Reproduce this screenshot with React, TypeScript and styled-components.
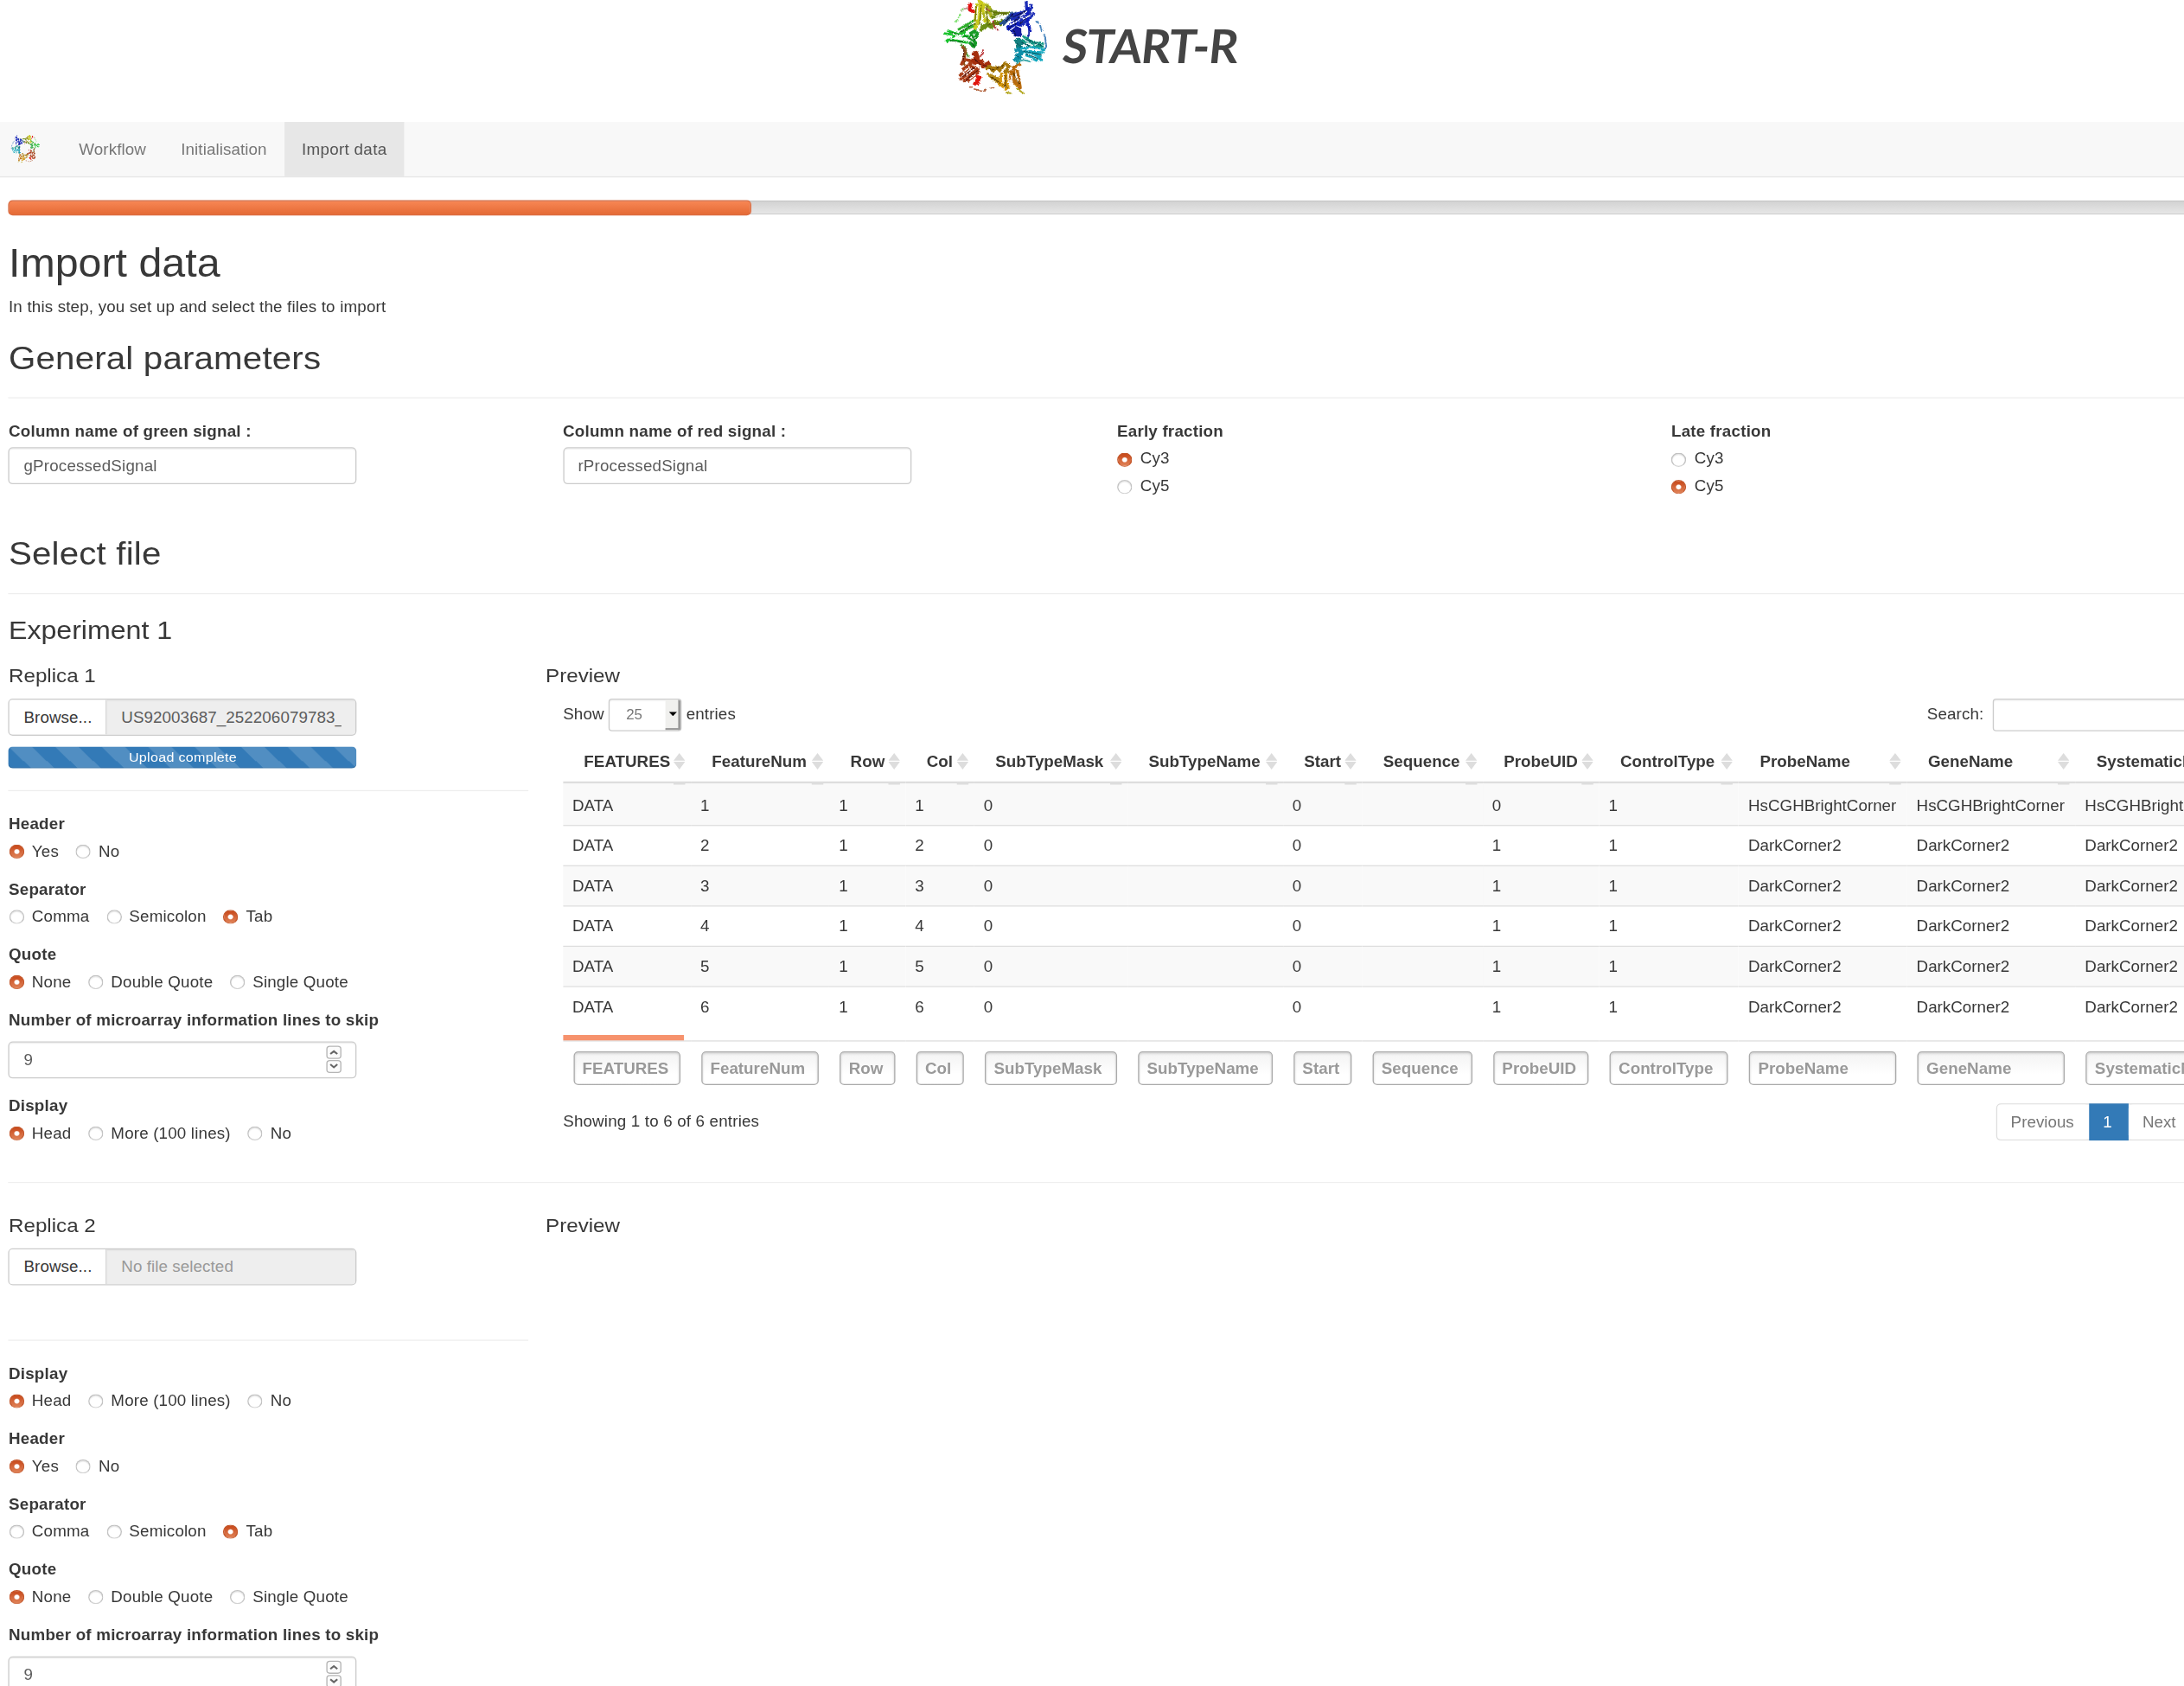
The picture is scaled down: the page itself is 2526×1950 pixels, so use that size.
import React from "react";
import styled, { createGlobalStyle, css } from "styled-components";

const GlobalStyle = createGlobalStyle`
  *, *::before, *::after { box-sizing: border-box; }
  html, body { margin: 0; padding: 0; background: #fff; }
`;

/* The interface is laid out in 14px Bootstrap units and enlarged as a whole. */
const Viewport = styled.div`
  width: 2526px;
  height: 1950px;
  overflow: hidden;
  background: #fff;
`;

const Page = styled.div`
  width: 1881px;
  height: 1550px;
  overflow: hidden;
  transform: scale(1.3431, 1.2587);
  transform-origin: 0 0;
  font-family: "Liberation Sans", Arial, sans-serif;
  font-size: 14px;
  line-height: 20px;
  letter-spacing: 0.12px;
  color: #383838;
`;

const Banner = styled.header`
  display: flex;
  height: 111.8px;
  padding-left: 807.9px;
`;

const BannerLogo = styled.div`
  width: 100.5px;
  height: 91.4px;
  svg { display: block; width: 100%; height: 100%; }
`;

const BannerTitle = styled.div`
  margin-left: 5.8px;
  padding-top: 10.6px;
  font-family: Lato, "Open Sans", sans-serif;
  font-weight: 700;
  font-size: 43px;
  line-height: 62px;
  letter-spacing: -0.9px;
  color: #444;
  transform: scaleX(0.92) skewX(-6deg);
  transform-origin: 0 50%;
`;

const Navbar = styled.nav`
  display: flex;
  height: 51px;
  margin-bottom: 21.6px;
  background: #f8f8f8;
  border-bottom: 1px solid #e7e7e7;
`;

const NavLogo = styled.div`
  width: 53px;
  padding: 12.5px 0 0 8.6px;
  svg { display: block; width: 26px; height: 26px; transform: scaleX(-1); }
`;

const NavItem = styled.a<{ $active?: boolean }>`
  height: 50px;
  padding: 15px;
  letter-spacing: ${(p) => (p.$active ? 0.23 : 0.06)}px;
  color: ${(p) => (p.$active ? "#555" : "#777")};
  background: ${(p) => (p.$active ? "#e7e7e7" : "transparent")};
`;

const Content = styled.main`
  width: 1879px;
  margin-left: 7.45px;
`;

const Track = styled.div`
  height: 13px;
  border: 1px solid #ccc;
  border-top-color: #b4b4b4;
  border-radius: 4px;
  background: linear-gradient(#d2d2d2, #e6e6e6);
`;

const TrackFill = styled.div`
  width: 639.6px;
  height: 14px;
  margin: -1.6px 0 0 -1px;
  border: 1px solid #dc6a3e;
  border-radius: 4px;
  background: linear-gradient(#f78654, #e56a35);
`;

const H1 = styled.h1`
  margin: 25px 0 10px;
  font-size: 36px;
  line-height: 40px;
  letter-spacing: 0;
  font-weight: 400;
`;

const Paragraph = styled.p`
  margin: 0 0 10px;
`;

const H2 = styled.h2`
  margin: 19.8px 0 0;
  font-size: 30px;
  line-height: 33px;
  font-weight: 400;
`;

const H3 = styled.h3`
  margin: 0 0 20px;
  font-size: 24px;
  line-height: 26.4px;
  letter-spacing: -0.05px;
  font-weight: 400;
`;

const H4 = styled.h4`
  margin: 0 0 10px;
  font-size: 18px;
  line-height: 19.8px;
  letter-spacing: 0;
  font-weight: 400;
`;

const Rule = styled.hr<{ $top?: number; $bottom?: number }>`
  height: 1px;
  margin: ${(p) => p.$top ?? 20}px 0 ${(p) => p.$bottom ?? 20}px;
  border: 0;
  background: #eee;
`;

const ParamRow = styled.section`
  display: grid;
  grid-template-columns: repeat(4, 477.25px);
  width: 1909px;
  height: 85.6px;
`;

const Label = styled.label`
  display: block;
  margin-bottom: 5px;
  font-weight: 700;
  letter-spacing: 0.15px;
`;

const inputBox = css`
  border: 1px solid #ccc;
  border-radius: 4px;
  box-shadow: inset 0 1px 1px rgba(0, 0, 0, 0.075);
  color: #5c5c5c;
`;

const TextBox = styled.div`
  ${inputBox}
  width: 300px;
  height: 34px;
  padding: 6px 12px;
`;

const Options = styled.div<{ $stacked?: boolean }>`
  display: flex;
  flex-direction: ${(p) => (p.$stacked ? "column" : "row")};
  gap: ${(p) => (p.$stacked ? 5 : 14.2)}px;
`;

const Option = styled.span`
  display: flex;
  white-space: nowrap;
`;

const Dot = styled.i<{ $on: boolean }>`
  flex: none;
  width: 13px;
  height: 13px;
  margin: 4.5px 6.7px 0 0.3px;
  border-radius: 50%;
  border: 1px solid ${(p) => (p.$on ? "#c4572b" : "#c2c2c2")};
  border-bottom-color: ${(p) => (p.$on ? "#d3764f" : "#d2d2d2")};
  background: ${(p) =>
    p.$on
      ? "radial-gradient(circle, #fff 0 1.7px, rgba(255,255,255,0) 2.7px), linear-gradient(#c8481a, #e08358)"
      : "#fff"};
  box-shadow: ${(p) => (p.$on ? "none" : "inset 0 1px 1px #e4e4e4")};
`;

const FormGroup = styled.div`
  margin-bottom: 15px;
`;

const Columns = styled.section<{ $top?: number }>`
  display: flex;
  gap: 15px;
  padding-top: ${(p) => p.$top ?? 0}px;
`;

const Sidebar = styled.div`
  width: 447.4px;
  flex: none;
`;

const FilePicker = styled.div`
  ${inputBox}
  display: flex;
  width: 300px;
  height: 34px;
  overflow: hidden;
  letter-spacing: 0.05px;
`;

const BrowseButton = styled.div`
  width: 84px;
  padding: 6px 0 0 12px;
  background: #fff;
  border-right: 1px solid #ccc;
  color: #383838;
`;

const FileName = styled.div<{ $empty: boolean }>`
  flex: 1;
  margin-right: 12px;
  padding: 6px 0 0 12px;
  overflow: hidden;
  white-space: nowrap;
  color: ${(p) => (p.$empty ? "#999" : "#5c5c5c")};
`;

const FileField = styled.div`
  flex: 1;
  display: flex;
  min-width: 0;
  background: #eee;
  box-shadow: inset 0 1px 1px rgba(0, 0, 0, 0.075);
`;

const UploadBar = styled.div`
  width: 300px;
  height: 20px;
  margin-top: 10px;
  border-radius: 4px;
  background-color: #337ab7;
  background-image: linear-gradient(
    45deg,
    rgba(255, 255, 255, 0.15) 25%,
    transparent 25%,
    transparent 50%,
    rgba(255, 255, 255, 0.15) 50%,
    rgba(255, 255, 255, 0.15) 75%,
    transparent 75%,
    transparent
  );
  background-size: 40px 40px;
  box-shadow: inset 0 -1px 0 rgba(0, 0, 0, 0.12);
  color: #fff;
  font-size: 12px;
  letter-spacing: 0.2px;
  text-align: center;
`;

const NumberBox = styled(TextBox)`
  display: flex;
  justify-content: space-between;
  margin-top: 10px;
  padding-top: 3px;
  padding-right: 12.6px;
  padding-bottom: 0;
  line-height: 26px;
`;

const Spinner = styled.div`
  display: flex;
  flex-direction: column;
  gap: 1px;
  svg {
    width: 13px;
    height: 12px;
    border: 1px solid #b5b5b5;
    border-radius: 3px;
    background: #fbfbfb;
  }
`;

const Preview = styled.div`
  width: 1424px;
  flex: none;
`;

const TableArea = styled.div`
  width: 1402px;
  margin-left: 15px;
  letter-spacing: 0;
`;

const Controls = styled.div`
  display: flex;
  height: 30px;
  margin-bottom: 10.6px;
`;

const ControlText = styled.span<{ $pushed?: boolean }>`
  margin-left: ${(p) => (p.$pushed ? "auto" : 0)};
  padding-top: 4px;
  letter-spacing: 0.08px;
`;

const SelectBox = styled.div`
  ${inputBox}
  display: flex;
  justify-content: space-between;
  width: 62.8px;
  height: 30px;
  margin: 0 4px;
  padding-left: 14px;
  border-radius: 3px;
  font-size: 12.6px;
  line-height: 29px;
  color: #777;
  overflow: hidden;
`;

const SelectArrow = styled.div`
  display: flex;
  align-items: center;
  justify-content: center;
  width: 13px;
  padding-left: 3px;
  border-right: 2px solid #999;
  border-bottom: 2px solid #999;
  background: #f0f0ee;
  svg { flex: none; width: 7px; height: 4px; }
`;

const SearchBox = styled.div`
  ${inputBox}
  width: 171.2px;
  height: 30px;
  margin-left: 7.4px;
  border-radius: 3px;
`;

const DataTable = styled.table`
  width: 1455px;
  table-layout: fixed;
  border-collapse: separate;
  border-spacing: 0;
`;

const HeadCell = styled.th`
  height: 38px;
  padding: 8px 0 8px 18px;
  border-bottom: 2px solid #ddd;
  text-align: left;
  font-weight: 700;
`;

const HeadInner = styled.div`
  position: relative;
  display: flex;
  justify-content: space-between;
  align-items: flex-start;
  height: 20px;
  padding-right: 5px;
  svg { width: 10px; height: 15px; margin-top: 2px; }
  &::after {
    content: "";
    position: absolute;
    right: 5px;
    top: 29px;
    width: 10px;
    height: 2px;
    background: #ddd;
  }
`;

const Cell = styled.td<{ $first: boolean; $odd: boolean }>`
  height: ${(p) => (p.$first ? 38 : 37)}px;
  padding: ${(p) => (p.$first ? 9 : 8)}px 8px 8px;
  border-top: ${(p) => (p.$first ? 0 : 1)}px solid #ddd;
  background: ${(p) => (p.$odd ? "#f9f9f9" : "#fff")};
  white-space: nowrap;
`;

const MarkerCell = styled.td`
  height: 13px;
  padding: 8px 6px 0 0;
  border-bottom: 1px solid #ddd;
`;

const ScrollMarker = styled.div`
  height: 5px;
  background: #f6926d;
`;

const FootCell = styled.td`
  padding: 9px 9px 0;
`;

const FilterBox = styled.div`
  height: 31px;
  padding: 5px 0 0 6.6px;
  border: 1px solid #aaa;
  border-radius: 4px;
  background: linear-gradient(#f3f3f3, #fff 70%);
  box-shadow: inset 0 1px 2px #ccc;
  color: #999;
  font-weight: 700;
  overflow: hidden;
`;

const TableFooter = styled.div`
  display: flex;
  justify-content: space-between;
  margin-top: 16.2px;
`;

const Info = styled.div`
  padding-top: 6px;
  letter-spacing: 0.12px;
`;

const Pager = styled.div`
  display: flex;
  width: 168.3px;
  height: 34px;
  border: 1px solid #ddd;
  border-radius: 4px;
`;

const PageButton = styled.div<{ $active?: boolean; $width: number }>`
  width: ${(p) => p.$width}px;
  margin: ${(p) => (p.$active ? "-1px 0" : "0")};
  padding: ${(p) => (p.$active ? 7 : 6)}px 12px 0;
  background: ${(p) => (p.$active ? "#337ab7" : "#fff")};
  color: ${(p) => (p.$active ? "#fff" : "#777")};
  border-radius: ${(p) => (p.$active ? 0 : 4)}px;
`;

type Strand = [string, string, number];

const STRANDS: Strand[] = [
  ["M80 37L98 28L110 33", "#b08a80", 3],
  ["M108 16l12 2M112 14v20l20 8", "#e01010", 8],
  ["M60 76l12-8M72 62l8-14M82 36l8-6", "#7fe070", 4],
  ["M22 116l18 2M34 106l60 20M40 118l70 8M36 136l70 12M52 128l44-16M30 138l8 8", "#19c22c", 6],
  ["M70 104l60-34M76 114l58-28M96 92l42-26M120 74l18-4", "#2fae2c", 6],
  ["M112 118l24-14M108 130l22 10M116 112l8 26l8 12l-8 16M126 104l12 12l-6 16M110 146l20 18", "#149a28", 8],
  ["M82 152l14 30M94 160l8 28l8 12", "#4d9b35", 4],
  ["M138 12l-8 78M150 8l-4 60l-18 34M142 2l20 14l-12 20l22 8M158 12l8 66", "#c9c91c", 8],
  ["M168 14l16 18l-16 14M178 32l10 28M160 44l22 40", "#a8b01d", 8],
  ["M182 36l30 10h36M194 50l40-4M186 62l34-12", "#718b18", 7],
  ["M160 98l14-14l14 10l12-18l18 8l10-16M150 108l10-22", "#6c8e12", 10],
  ["M168 30l14 8M192 72l8 28M204 96l8 12", "#b53a42", 3],
  ["M216 84l24-18l22-24M228 86l28-30M238 72l36-28", "#27508e", 6],
  ["M252 54l50-12l28-18M254 68l46-18M256 84l54-46l-2-34M278 82l42-36l6-32M288 90l38-34l10-12", "#1f2fb6", 7],
  ["M240 96l24-18M242 104l30-22l18 6M312 24v66M314 82l10 28", "#0c1cbc", 7],
  ["M258 112l10-8l4 16l12-6l4 12M268 96l16 6l-2 20", "#121ca0", 10],
  ["M318 96v24l-8 18", "#1620a8", 4],
  ["M340 74l12 6M356 86l6 22M370 118l4 12l4 34l-14 12", "#4a86be", 4],
  ["M296 124l18 14l24 10l32 4M292 138l30 20l48 4M310 128l26 38M324 140l10 18", "#179a86", 6],
  ["M268 146l14-8l8 10l-10 14l14 4M274 154l22-6", "#12807f", 10],
  ["M286 168l40-4l48 10M290 180l78 2M302 176l60 22M306 190l42 22M318 172l46 40", "#16a9c0", 6],
  ["M268 176l14-6l10 14l-10 8l-12 16l18 2M272 186l20 18", "#0a8ea8", 9],
  ["M276 214l24-6l24 6M284 208l-12 24", "#39a5a8", 4],
  ["M86 160l12 18l-8 32M96 180l-4 46", "#90531d", 7],
  ["M82 226l10-22l30 10M86 242l34-26M76 264l40-34l26 10M78 276l54-38M90 284l54-48M104 282l42-36", "#a93b16", 7],
  ["M122 192l12-8l6 18l-16 8l10 14M126 198l26 24M144 218l10-4l4 16l18-10l6 12", "#a52e0c", 10],
  ["M134 264l14 6l-12 10l-8 14M146 266l-8 28", "#e0140c", 8],
  ["M158 172v14l-12 10", "#bd4143", 4],
  ["M110 302h12M126 308l14 4l12 4h10l6-8M184 306l14-2", "#b46743", 3],
  ["M168 240l14-10l10 16l14-12l10 10l18-24l14 10l-14 20l14-4M180 236h48", "#a7790b", 8],
  ["M176 260l40 30l8 8M184 264l36 20M170 254l50 22", "#b48a18", 5],
  ["M224 252l-8 40l14 10M238 254v60M234 268l12 40M214 278l34 24M250 274l30 24", "#d59710", 7],
  ["M256 244l-4 34l34 20M266 230l-2 42l24 38M276 240l8 40l4 28M260 236l30-14", "#b86b10", 7],
  ["M238 320l18 4M274 306l14 10l14 10", "#b4a822", 4],
];

const SHADES: Strand[] = [
  ["M46 112l60 18M44 140l52 6M80 110l48-28M112 124l20 16M118 148l12 14", "#0d5c1b", 2.5],
  ["M134 18l-4 70M152 18l-6 68M170 18l4 62M192 44l48 2M174 88l20-8l20 2", "#5b6308", 2.5],
  ["M236 74l28-26M260 60l52-24M262 76l46-36M286 84l36-34M264 104l8 18M246 98l28-18", "#08104f", 2.5],
  ["M304 136l60 24M292 146l28 16M276 150l14 14M296 176l66 14M306 186l44 18M272 190l14 12", "#07535c", 2.5],
  ["M86 268l42-34M96 282l44-38M128 204l24 22M158 226l14 4M92 172l-2 40", "#56150a", 2.5],
  ["M178 238l20 4M204 238l26-12M184 266l34 22M236 260v44M262 250l22 42M226 292l18 14", "#5d3c04", 2.5],
  ["M50 118l40 6M140 22l-4 46M164 30l4 34M286 58l26-20M316 168l40 6M100 262l30-24M246 276l20 18M124 136l-10-8", "#fff", 3],
  ["M62 128l30-8M116 84l18-8M200 58l20-6M250 88l24-14M296 66l28-14M308 150l24 8M300 198l26 6M88 252l24-20M112 274l20-16M256 262l4 24M272 262l10 20M226 266l2 24", "#fff", 3.5],
];

const Protein = () => (
  <svg viewBox="3 0 405 345" preserveAspectRatio="none" fill="none" strokeLinejoin="round">
    <filter id="ragged" x="0" y="0" width="1" height="1">
      <feTurbulence type="fractalNoise" baseFrequency="0.25" numOctaves="2" seed="4" />
      <feDisplacementMap in="SourceGraphic" scale="9" xChannelSelector="R" yChannelSelector="G" />
    </filter>
    <g filter="url(#ragged)">
      {STRANDS.map(([d, color, width], i) => (
        <path key={i} d={d} stroke={color} strokeWidth={width * 1.45} />
      ))}
      {SHADES.map(([d, color, width], i) => (
        <path key={i} d={d} stroke={color} strokeWidth={width * 1.3} />
      ))}
    </g>
  </svg>
);

/* Same ring, cropped close and with broken strands for small sizes. */
const SmallProtein = () => (
  <svg viewBox="10 0 380 335" preserveAspectRatio="none" fill="none">
    {STRANDS.map(([d, color, width], i) => (
      <path key={i} d={d} stroke={color} strokeWidth={width + 4} strokeDasharray="19 13" />
    ))}
  </svg>
);

const Chevron = ({ up }: { up?: boolean }) => (
  <svg viewBox="0 0 11 10" fill="none" stroke="#666" strokeWidth="1.6">
    <path d={up ? "M2.5 6.5L5.5 4L8.5 6.5" : "M2.5 3L5.5 5.7L8.5 3"} />
  </svg>
);

const SortIcon = () => (
  <svg viewBox="0 0 10 15" fill="#ddd">
    <path d="M0 7L5 0L10 7ZM0 8H10L5 15Z" />
  </svg>
);

type ChoiceProps = { label: string; options: string[]; selected: number; stacked?: boolean };

const Choice = ({ label, options, selected, stacked }: ChoiceProps) => (
  <FormGroup>
    <Label>{label}</Label>
    <Options $stacked={stacked}>
      {options.map((o, i) => (
        <Option key={o}>
          <Dot $on={i === selected} />
          {o}
        </Option>
      ))}
    </Options>
  </FormGroup>
);

const DisplayChoice = () => (
  <Choice label="Display" options={["Head", "More (100 lines)", "No"]} selected={0} />
);

const ParseChoices = () => (
  <>
    <Choice label="Header" options={["Yes", "No"]} selected={0} />
    <Choice label="Separator" options={["Comma", "Semicolon", "Tab"]} selected={2} />
    <Choice label="Quote" options={["None", "Double Quote", "Single Quote"]} selected={0} />
    <FormGroup>
      <Label>Number of microarray information lines to skip</Label>
      <NumberBox>
        9
        <Spinner>
          <Chevron up />
          <Chevron />
        </Spinner>
      </NumberBox>
    </FormGroup>
  </>
);

const FileInput = ({ name }: { name?: string }) => (
  <FilePicker>
    <BrowseButton>Browse...</BrowseButton>
    <FileField>
      <FileName $empty={!name}>{name ?? "No file selected"}</FileName>
    </FileField>
  </FilePicker>
);

const COLUMNS: [string, number][] = [
  ["FEATURES", 110.2],
  ["FeatureNum", 119.3],
  ["Row", 65.7],
  ["Col", 59.2],
  ["SubTypeMask", 131.9],
  ["SubTypeName", 133.9],
  ["Start", 68.1],
  ["Sequence", 103.9],
  ["ProbeUID", 100.3],
  ["ControlType", 120.2],
  ["ProbeName", 144.9],
  ["GeneName", 145],
  ["SystematicName", 152.4],
];

const ROWS = [1, 2, 3, 4, 5, 6].map((n) => {
  const probe = n === 1 ? "HsCGHBrightCorner" : "DarkCorner2";
  return ["DATA", n, 1, n, 0, "", 0, "", n === 1 ? 0 : 1, 1, probe, probe, probe];
});

const PreviewTable = () => (
  <TableArea>
    <Controls>
      <ControlText>Show</ControlText>
      <SelectBox>
        25
        <SelectArrow>
          <svg viewBox="0 0 7 4"><path d="M0 0H7L3.5 4Z" /></svg>
        </SelectArrow>
      </SelectBox>
      <ControlText>entries</ControlText>
      <ControlText $pushed>Search:</ControlText>
      <SearchBox />
    </Controls>
    <DataTable>
      <colgroup>
        {COLUMNS.map(([name, width]) => (
          <col key={name} style={{ width }} />
        ))}
      </colgroup>
      <thead>
        <tr>
          {COLUMNS.map(([name]) => (
            <HeadCell key={name}>
              <HeadInner>
                {name}
                <SortIcon />
              </HeadInner>
            </HeadCell>
          ))}
        </tr>
      </thead>
      <tbody>
        {ROWS.map((row, r) => (
          <tr key={r}>
            {row.map((value, c) => (
              <Cell key={c} $first={r === 0} $odd={r % 2 === 0}>
                {value}
              </Cell>
            ))}
          </tr>
        ))}
      </tbody>
      <tfoot>
        <tr>
          {COLUMNS.map(([name], i) => (
            <MarkerCell key={name}>{i === 0 && <ScrollMarker />}</MarkerCell>
          ))}
        </tr>
        <tr>
          {COLUMNS.map(([name]) => (
            <FootCell key={name}>
              <FilterBox>{name}</FilterBox>
            </FootCell>
          ))}
        </tr>
      </tfoot>
    </DataTable>
    <TableFooter>
      <Info>Showing 1 to 6 of 6 entries</Info>
      <Pager>
        <PageButton $width={79.4}>Previous</PageButton>
        <PageButton $width={34} $active>1</PageButton>
        <PageButton $width={52.9}>Next</PageButton>
      </Pager>
    </TableFooter>
  </TableArea>
);

export default function App() {
  return (
    <Viewport>
      <GlobalStyle />
      <Page>
        <Banner>
          <BannerLogo>
            <Protein />
          </BannerLogo>
          <BannerTitle>START-R</BannerTitle>
        </Banner>
        <Navbar>
          <NavLogo>
            <SmallProtein />
          </NavLogo>
          <NavItem>Workflow</NavItem>
          <NavItem>Initialisation</NavItem>
          <NavItem $active>Import data</NavItem>
        </Navbar>
        <Content>
          <Track>
            <TrackFill />
          </Track>
          <H1>Import data</H1>
          <Paragraph>In this step, you set up and select the files to import</Paragraph>
          <H2>General parameters</H2>
          <Rule />
          <ParamRow>
            <div>
              <Label>Column name of green signal :</Label>
              <TextBox>gProcessedSignal</TextBox>
            </div>
            <div>
              <Label>Column name of red signal :</Label>
              <TextBox>rProcessedSignal</TextBox>
            </div>
            <Choice label="Early fraction" options={["Cy3", "Cy5"]} selected={0} stacked />
            <Choice label="Late fraction" options={["Cy3", "Cy5"]} selected={1} stacked />
          </ParamRow>
          <H2>Select file</H2>
          <Rule />
          <H3>Experiment 1</H3>
          <Columns>
            <Sidebar>
              <H4>Replica 1</H4>
              <FileInput name="US92003687_252206079783_S01" />
              <UploadBar>Upload complete</UploadBar>
              <Rule />
              <ParseChoices />
              <DisplayChoice />
            </Sidebar>
            <Preview>
              <H4>Preview</H4>
              <PreviewTable />
            </Preview>
          </Columns>
          <Rule $bottom={0} />
          <Columns $top={30.6}>
            <Sidebar>
              <H4>Replica 2</H4>
              <FileInput />
              <Rule $top={49.8} />
              <DisplayChoice />
              <ParseChoices />
            </Sidebar>
            <Preview>
              <H4>Preview</H4>
            </Preview>
          </Columns>
        </Content>
      </Page>
    </Viewport>
  );
}
